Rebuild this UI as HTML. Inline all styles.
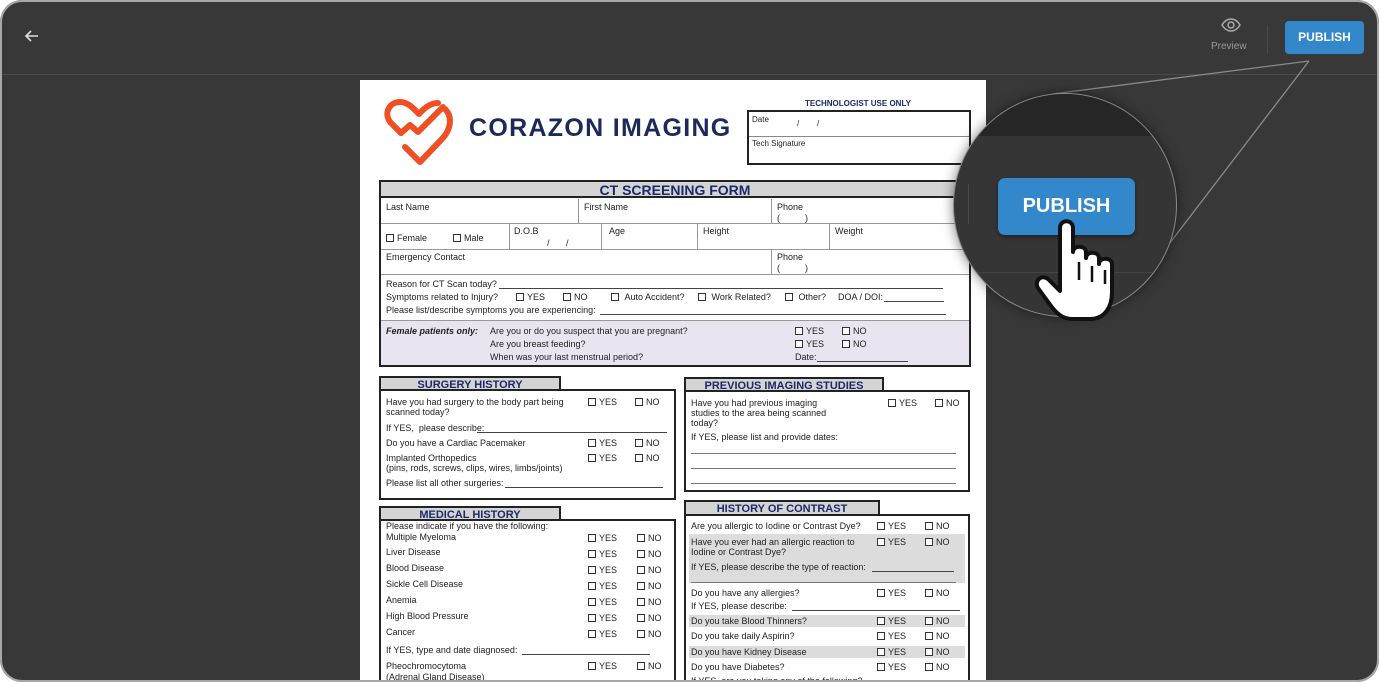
<!DOCTYPE html>
<html><head><meta charset="utf-8"><style>
*{margin:0;padding:0;box-sizing:border-box}
body{width:1379px;height:682px;background:#fff;overflow:hidden;font-family:"Liberation Sans",Arial,sans-serif}
#frame{position:absolute;left:0;top:0;width:1379px;height:682px;border-radius:22px;background:#383838;overflow:hidden}
#bd{position:absolute;left:0;top:0;width:1379px;height:682px;border:2px solid #a8a8a8;border-radius:22px}
.a{position:absolute}
.t{position:absolute;font-size:9px;line-height:10px;color:#222;white-space:nowrap}
.t i{display:inline-block;width:8px;height:8px;border:1px solid #333;vertical-align:-1px;margin-right:3px;background:#fff}
.ln{position:absolute;height:1px;background:#444}
.box{position:absolute;border:2px solid #222}
.tab{position:absolute;border:2px solid #222;background:#d4d4d4;color:#1b2a6a;font-weight:bold;font-size:11px;line-height:14px;text-align:center}
.v{position:absolute;width:1px;background:#999}
.h{position:absolute;height:1px;background:#999}
.nv{color:#1b2a6a}
</style></head><body>
<div id="frame">
<svg class="a" style="left:22px;top:28px" width="20" height="16" viewBox="0 0 20 16"><path d="M16 8H4M9 3L4 8l5 5" stroke="#ddd" stroke-width="1.6" fill="none"/></svg>
<div class="a" style="left:0;top:74px;width:1379px;height:1px;background:#4a4a4a"></div>
<svg class="a" style="left:1220px;top:17px" width="22" height="16" viewBox="0 0 22 16"><path d="M2 8C5 3 8 2 11 2s6 1 9 6c-3 5-6 6-9 6S5 13 2 8z" stroke="#aaa" stroke-width="1.5" fill="none"/><circle cx="11" cy="8" r="3" stroke="#aaa" stroke-width="1.5" fill="none"/></svg>
<div class="t" style="left:1211px;top:42px;font-size:10px;color:#999">Preview</div>
<div class="a" style="left:1267px;top:25px;width:1px;height:28px;background:#4a4a4a"></div>
<div class="a" style="left:1285px;top:21px;width:79px;height:33px;background:#3388cc;border-radius:4px;color:#fff;font-size:12px;font-weight:bold;line-height:33px;text-align:center">PUBLISH</div>

<div class="a" style="left:360px;top:80px;width:626px;height:610px;background:#fff"></div>
<svg class="a" style="left:375px;top:90px" width="90" height="80" viewBox="0 0 90 80"><g stroke="#f04e23" stroke-width="6" fill="none" stroke-linecap="round" stroke-linejoin="round"><path d="M26,43 L16,33 C8,24 14,12 25,12 C33,12 38,18 44,24 C50,17 56,13 63,13"/><path d="M26,43 L35,35 L43,42 L68,17"/><path d="M70,19 C78,27 76,40 66,50 L45,72 L30,57"/></g></svg>
<div class="t nv" style="left:469px;top:114px;font-size:25px;line-height:28px;font-weight:bold;letter-spacing:1.3px;color:#1b2a5a">CORAZON IMAGING</div>
<div class="t nv" style="left:805px;top:99px;font-size:8px;font-weight:bold">TECHNOLOGIST USE ONLY</div>
<div class="box" style="left:747px;top:110px;width:224px;height:55px"></div>
<div class="h" style="left:749px;top:136px;width:220px;background:#888"></div>
<div class="t" style="left:752px;top:115px;font-size:8px">Date</div>
<div class="t" style="left:797px;top:119px;font-size:8px">/</div><div class="t" style="left:817px;top:119px;font-size:8px">/</div>
<div class="t" style="left:752px;top:139px;font-size:8px">Tech Signature</div>

<div class="box" style="left:379px;top:180px;width:592px;height:187px"></div>
<div class="a" style="left:381px;top:182px;width:588px;height:16px;background:#d4d4d4;border-bottom:2px solid #222"></div>
<div class="t nv" style="left:381px;top:183px;width:588px;text-align:center;font-size:14px;line-height:15px;font-weight:bold">CT SCREENING FORM</div>
<div class="h" style="left:381px;top:223px;width:588px"></div>
<div class="h" style="left:381px;top:249px;width:588px"></div>
<div class="h" style="left:381px;top:274px;width:588px"></div>
<div class="a" style="left:381px;top:320px;width:588px;height:45px;background:#e8e4f0;border-top:1px solid #999"></div>
<div class="v" style="left:578px;top:199px;height:24px"></div>
<div class="v" style="left:771px;top:199px;height:24px"></div>
<div class="v" style="left:509px;top:223px;height:26px"></div>
<div class="v" style="left:601px;top:223px;height:26px"></div>
<div class="v" style="left:697px;top:223px;height:26px"></div>
<div class="v" style="left:829px;top:223px;height:26px"></div>
<div class="v" style="left:771px;top:249px;height:25px"></div>
<div class="t" style="left:386px;top:202px">Last Name</div>
<div class="t" style="left:584px;top:202px">First Name</div>
<div class="t" style="left:777px;top:202px">Phone</div>
<div class="t" style="left:777px;top:213px">(&nbsp;&nbsp;&nbsp;&nbsp;&nbsp;&nbsp;&nbsp;&nbsp;&nbsp;&nbsp;)</div>
<div class="t" style="left:386px;top:233px"><i></i>Female</div>
<div class="t" style="left:453px;top:233px"><i></i>Male</div>
<div class="t" style="left:514px;top:226px">D.O.B</div>
<div class="t" style="left:547px;top:238px">/</div><div class="t" style="left:566px;top:238px">/</div>
<div class="t" style="left:609px;top:226px">Age</div>
<div class="t" style="left:703px;top:226px">Height</div>
<div class="t" style="left:835px;top:226px">Weight</div>
<div class="t" style="left:386px;top:252px">Emergency Contact</div>
<div class="t" style="left:777px;top:252px">Phone</div>
<div class="t" style="left:777px;top:263px">(&nbsp;&nbsp;&nbsp;&nbsp;&nbsp;&nbsp;&nbsp;&nbsp;&nbsp;&nbsp;)</div>
<div class="t" style="left:386px;top:279px">Reason for CT Scan today?</div><div class="ln" style="left:499px;top:288px;width:444px"></div>
<div class="t" style="left:386px;top:292px">Symptoms related to Injury?</div>
<div class="t" style="left:516px;top:292px"><i></i>YES</div>
<div class="t" style="left:563px;top:292px"><i></i>NO</div>
<div class="t" style="left:611px;top:292px"><i></i>&nbsp;Auto Accident?</div>
<div class="t" style="left:698px;top:292px"><i></i>&nbsp;Work Related?</div>
<div class="t" style="left:785px;top:292px"><i></i>&nbsp;Other?</div>
<div class="t" style="left:838px;top:292px">DOA / DOI:</div><div class="ln" style="left:884px;top:301px;width:60px"></div>
<div class="t" style="left:386px;top:305px">Please list/describe symptoms you are experiencing:</div><div class="ln" style="left:600px;top:314px;width:346px"></div>
<div class="t" style="left:386px;top:326px;font-weight:bold;font-style:italic">Female patients only:</div>
<div class="t" style="left:490px;top:326px">Are you or do you suspect that you are pregnant?</div>
<div class="t" style="left:490px;top:339px">Are you breast feeding?</div>
<div class="t" style="left:490px;top:352px">When was your last menstrual period?</div>
<div class="t" style="left:795px;top:326px"><i></i>YES</div><div class="t" style="left:842px;top:326px"><i></i>NO</div>
<div class="t" style="left:795px;top:339px"><i></i>YES</div><div class="t" style="left:842px;top:339px"><i></i>NO</div>
<div class="t" style="left:795px;top:352px">Date:</div><div class="ln" style="left:817px;top:361px;width:91px"></div>

<div class="box" style="left:379px;top:389px;width:297px;height:111px"></div>
<div class="tab" style="left:379px;top:376px;width:182px;height:15px">SURGERY HISTORY</div>
<div class="t" style="left:386px;top:397px">Have you had surgery to the body part being</div>
<div class="t" style="left:386px;top:407px">scanned today?</div>
<div class="t" style="left:588px;top:397px"><i></i>YES</div><div class="t" style="left:635px;top:397px"><i></i>NO</div>
<div class="t" style="left:386px;top:423px">If YES,&nbsp; please describe:</div><div class="ln" style="left:477px;top:432px;width:190px"></div>
<div class="t" style="left:386px;top:438px">Do you have a Cardiac Pacemaker</div>
<div class="t" style="left:588px;top:438px"><i></i>YES</div><div class="t" style="left:635px;top:438px"><i></i>NO</div>
<div class="t" style="left:386px;top:453px">Implanted Orthopedics</div>
<div class="t" style="left:386px;top:463px">(pins, rods, screws, clips, wires, limbs/joints)</div>
<div class="t" style="left:588px;top:453px"><i></i>YES</div><div class="t" style="left:635px;top:453px"><i></i>NO</div>
<div class="t" style="left:386px;top:478px">Please list all other surgeries:</div><div class="ln" style="left:505px;top:487px;width:158px"></div>

<div class="box" style="left:684px;top:390px;width:286px;height:102px"></div>
<div class="tab" style="left:684px;top:377px;width:200px;height:15px">PREVIOUS IMAGING STUDIES</div>
<div class="t" style="left:691px;top:398px">Have you had previous imaging</div>
<div class="t" style="left:691px;top:408px">studies to the area being scanned</div>
<div class="t" style="left:691px;top:418px">today?</div>
<div class="t" style="left:888px;top:398px"><i></i>YES</div><div class="t" style="left:935px;top:398px"><i></i>NO</div>
<div class="t" style="left:691px;top:432px">If YES, please list and provide dates:</div>
<div class="ln" style="left:691px;top:453px;width:265px;background:#777"></div>
<div class="ln" style="left:691px;top:468px;width:265px;background:#777"></div>
<div class="ln" style="left:691px;top:483px;width:265px;background:#777"></div>

<div class="box" style="left:379px;top:519px;width:297px;height:180px"></div>
<div class="tab" style="left:379px;top:506px;width:182px;height:15px">MEDICAL HISTORY</div>
<div class="t" style="left:386px;top:521px">Please indicate if you have the following:</div>
<div class="t" style="left:386px;top:532px">Multiple Myeloma</div>
<div class="t" style="left:386px;top:547px">Liver Disease</div>
<div class="t" style="left:386px;top:563px">Blood Disease</div>
<div class="t" style="left:386px;top:579px">Sickle Cell Disease</div>
<div class="t" style="left:386px;top:595px">Anemia</div>
<div class="t" style="left:386px;top:611px">High Blood Pressure</div>
<div class="t" style="left:386px;top:627px">Cancer</div>
<div class="t" style="left:588px;top:533px"><i></i>YES</div><div class="t" style="left:637px;top:533px"><i></i>NO</div>
<div class="t" style="left:588px;top:549px"><i></i>YES</div><div class="t" style="left:637px;top:549px"><i></i>NO</div>
<div class="t" style="left:588px;top:565px"><i></i>YES</div><div class="t" style="left:637px;top:565px"><i></i>NO</div>
<div class="t" style="left:588px;top:581px"><i></i>YES</div><div class="t" style="left:637px;top:581px"><i></i>NO</div>
<div class="t" style="left:588px;top:597px"><i></i>YES</div><div class="t" style="left:637px;top:597px"><i></i>NO</div>
<div class="t" style="left:588px;top:613px"><i></i>YES</div><div class="t" style="left:637px;top:613px"><i></i>NO</div>
<div class="t" style="left:588px;top:629px"><i></i>YES</div><div class="t" style="left:637px;top:629px"><i></i>NO</div>
<div class="t" style="left:386px;top:645px">If YES, type and date diagnosed:</div><div class="ln" style="left:522px;top:654px;width:128px"></div>
<div class="t" style="left:386px;top:661px">Pheochromocytoma</div>
<div class="t" style="left:386px;top:672px">(Adrenal Gland Disease)</div>
<div class="t" style="left:588px;top:661px"><i></i>YES</div><div class="t" style="left:637px;top:661px"><i></i>NO</div>

<div class="box" style="left:684px;top:514px;width:286px;height:185px"></div>
<div class="tab" style="left:684px;top:500px;width:196px;height:16px">HISTORY OF CONTRAST</div>
<div class="a" style="left:689px;top:534px;width:276px;height:49px;background:#dcdcdc"></div>
<div class="a" style="left:689px;top:615px;width:276px;height:12px;background:#dcdcdc"></div>
<div class="a" style="left:689px;top:646px;width:276px;height:12px;background:#dcdcdc"></div>
<div class="t" style="left:691px;top:521px">Are you allergic to Iodine or Contrast Dye?</div>
<div class="t" style="left:877px;top:521px"><i></i>YES</div><div class="t" style="left:925px;top:521px"><i></i>NO</div>
<div class="t" style="left:691px;top:537px">Have you ever had an allergic reaction to</div>
<div class="t" style="left:691px;top:547px">Iodine or Contrast Dye?</div>
<div class="t" style="left:877px;top:537px"><i></i>YES</div><div class="t" style="left:925px;top:537px"><i></i>NO</div>
<div class="t" style="left:691px;top:562px">If YES, please describe the type of reaction:</div><div class="ln" style="left:872px;top:571px;width:82px"></div>
<div class="ln" style="left:691px;top:582px;width:265px;background:#777"></div>
<div class="t" style="left:691px;top:588px">Do you have any allergies?</div>
<div class="t" style="left:877px;top:588px"><i></i>YES</div><div class="t" style="left:925px;top:588px"><i></i>NO</div>
<div class="t" style="left:691px;top:601px">If YES, please describe:</div><div class="ln" style="left:792px;top:610px;width:168px"></div>
<div class="t" style="left:691px;top:616px">Do you take Blood Thinners?</div>
<div class="t" style="left:877px;top:616px"><i></i>YES</div><div class="t" style="left:925px;top:616px"><i></i>NO</div>
<div class="t" style="left:691px;top:631px">Do you take daily Aspirin?</div>
<div class="t" style="left:877px;top:631px"><i></i>YES</div><div class="t" style="left:925px;top:631px"><i></i>NO</div>
<div class="t" style="left:691px;top:647px">Do you have Kidney Disease</div>
<div class="t" style="left:877px;top:647px"><i></i>YES</div><div class="t" style="left:925px;top:647px"><i></i>NO</div>
<div class="t" style="left:691px;top:662px">Do you have Diabetes?</div>
<div class="t" style="left:877px;top:662px"><i></i>YES</div><div class="t" style="left:925px;top:662px"><i></i>NO</div>
<div class="t" style="left:691px;top:676px">If YES, are you taking any of the following?</div>

<svg class="a" style="left:0;top:0" width="1379" height="682"><g stroke="#8a8a8a" stroke-width="1.3"><line x1="1309" y1="61" x2="1052" y2="94"/><line x1="1309" y1="61" x2="1163" y2="252"/></g></svg>
<div class="a" style="left:953px;top:93px;width:224px;height:224px;border-radius:50%;overflow:hidden;background:#353535;box-shadow:0 0 12px rgba(0,0,0,.5);border:1.5px solid #8a8a8a">
 <div class="a" style="left:0;top:0;width:224px;height:42px;background:#262626"></div>
 <div class="a" style="left:0;top:178px;width:224px;height:1px;background:#444"></div>
 <div class="a" style="left:14px;top:90px;width:1px;height:40px;background:#4a4a4a"></div>
 <div class="a" style="left:44px;top:84px;width:137px;height:57px;background:#3388cc;border-radius:7px;color:#fff;font-size:20px;font-weight:bold;line-height:57px;text-align:center;box-shadow:0 2px 4px rgba(0,0,0,.4)">PUBLISH</div>
</div>
<svg class="a" style="left:0;top:0" width="1379" height="682"><path d="M1060,228 C1060,219 1073,219 1073,228 L1073,252 C1073,245 1086,245 1086,252 L1086,258 C1086,251 1099,251 1099,258 L1099,264 C1099,257 1112,257 1112,264 L1112,292 C1112,308 1104,319 1090,319 L1073,319 C1063,319 1057,314 1051,306 L1038,288 C1034,281 1041,274 1048,279 L1060,291 Z" fill="#fff" stroke="#111" stroke-width="4" stroke-linejoin="round"/><g stroke="#111" stroke-width="2.5"><line x1="1079" y1="262" x2="1079" y2="280"/><line x1="1092" y1="266" x2="1092" y2="282"/><line x1="1105" y1="270" x2="1105" y2="284"/></g></svg>
<div id="bd"></div>
</div>
</body></html>
